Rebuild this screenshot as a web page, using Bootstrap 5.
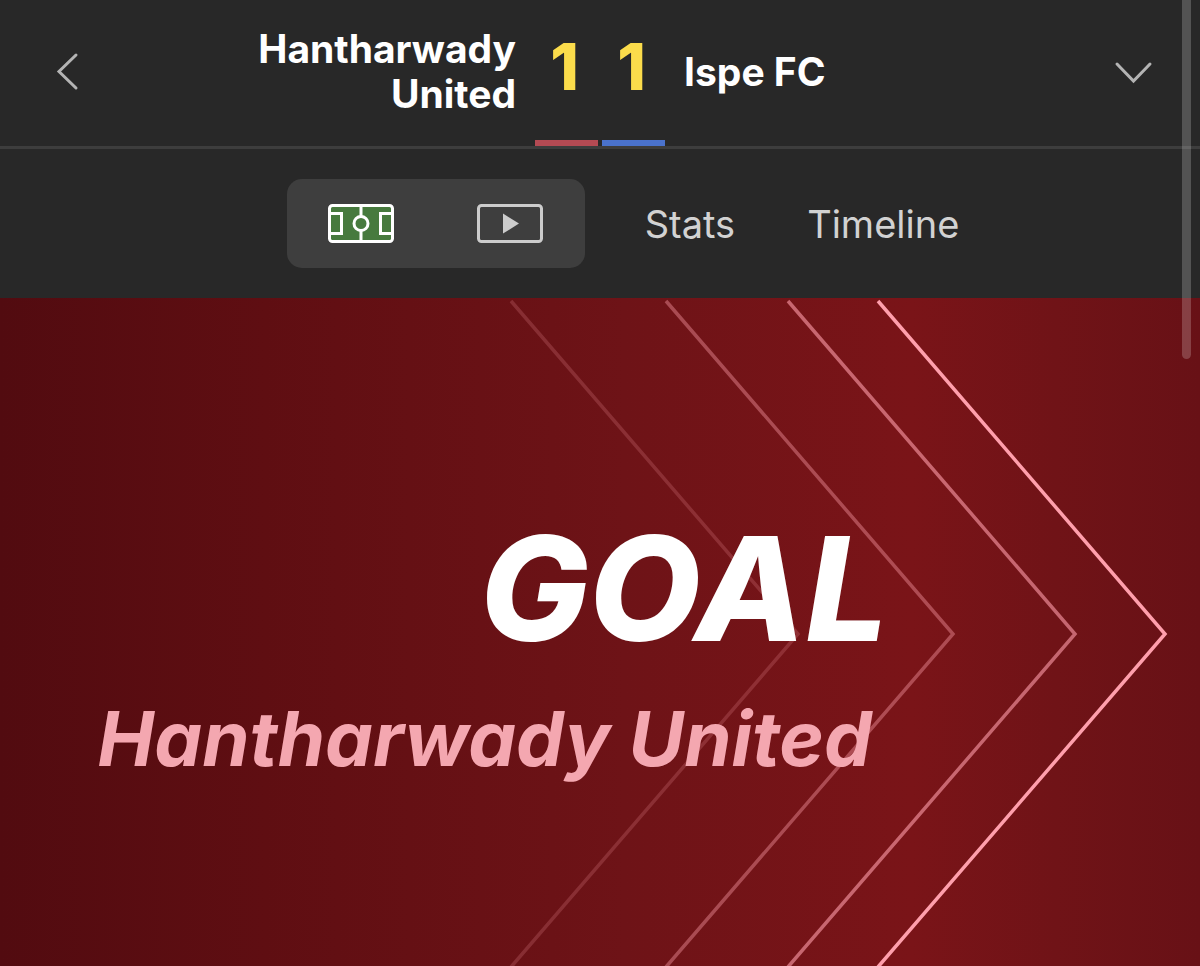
<!DOCTYPE html>
<html lang="en">
<head>
<meta charset="utf-8">
<meta name="viewport" content="width=device-width, initial-scale=1">
<title>Hantharwady United v Ispe FC</title>
<link href="https://cdn.jsdelivr.net/npm/bootstrap@5.3.0/dist/css/bootstrap.min.css" rel="stylesheet">
<style>
  body { background: #282828; color: #fff; font-family: Inter, "Liberation Sans", sans-serif; }
  .score-header { display: grid; grid-template-columns: 1fr auto 1fr; border-bottom: 3px solid #3d3d3d; }
  .side { padding: 0 19px 4px; }
  .team { font-size: 39px; line-height: 45px; font-weight: 700; }
  .home-team { max-width: 300px; }
  .icon-btn { color: #b4b4b4; line-height: 0; }
  .goals { width: 63px; padding: 30px 4px 36px 0; font-size: 65px; line-height: 74px; font-weight: 800; border-bottom: 6px solid; text-align: center; }
  .goals span { color: #fbdc4b; }
  .goals-home { border-color: #b44a53; }
  .goals-away { border-color: #4a72cc; }
  .view-tabs { padding: 30px 0 30px 46px; font-size: 38px; line-height: 45px; }
  .view-group { background: #3e3e3e; border-radius: 15px; height: 89px; }
  .view-group button { width: 149px; line-height: 0; }
  .view-tabs a { color: #d2d2d2; padding-top: 2px; }
  .first-link { margin-left: 60px; }
  .next-link { margin-left: 72px; }
  .goal-panel { background: linear-gradient(90deg, #520b10 0%, #5f0e12 22%, #6e1317 52%, #7a1418 76%, #701317 88%, #681116 100%); padding: 28px 312px 0 0; }
  .goal-title { font-size: 145px; line-height: 160px; font-weight: 800; font-style: italic; }
  .goal-team { font-size: 76px; line-height: 90px; font-weight: 700; font-style: italic; color: #f4a7b0; margin-top: 24px; padding-right: 16px; }
  .scroll-thumb { width: 9px; height: 359px; right: 9px; background: rgba(255,255,255,.2); border-radius: 0 0 5px 5px; }
</style>
</head>
<body class="min-vh-100 d-flex flex-column position-relative">
<header class="score-header">
  <div class="side d-flex align-items-center justify-content-between">
    <button type="button" class="icon-btn btn p-0 border-0 ms-4" aria-label="Back">
      <svg width="46" height="40" viewBox="0 0 46 40" fill="none" stroke="currentColor" stroke-width="3" stroke-linecap="round"><path d="M33 4 16 20.500 33 37"/></svg>
    </button>
    <div class="team home-team text-end">Hantharwady United</div>
  </div>
  <div class="d-flex">
    <div class="goals goals-home"><span>1</span></div>
    <div class="goals goals-away ms-1"><span>1</span></div>
  </div>
  <div class="side d-flex align-items-center justify-content-between">
    <div class="team">Ispe FC</div>
    <button type="button" class="icon-btn btn p-0 border-0 me-4" aria-label="Show matches">
      <svg width="46" height="40" viewBox="0 0 46 40" fill="none" stroke="currentColor" stroke-width="3" stroke-linecap="round"><path d="M6 13 22.500 30 39 13"/></svg>
    </button>
  </div>
</header>
<nav class="view-tabs d-flex align-items-center justify-content-center" aria-label="Match views">
  <div class="view-group d-flex">
    <button type="button" class="btn p-0 border-0" aria-label="Pitch">
      <svg width="66" height="39" viewBox="0 0 66 39" fill="none" stroke="#fff" stroke-width="3"><rect x="1.500" y="1.500" width="63" height="36" rx="3" fill="#477a3e"/><path d="M33 2v35M2 9.500h11.500v20H2M64 9.500H52.500v20H64"/><circle cx="33" cy="19.500" r="7" fill="#477a3e"/></svg>
    </button>
    <button type="button" class="btn p-0 border-0" aria-label="Video">
      <svg width="66" height="39" viewBox="0 0 66 39"><rect x="1.500" y="1.500" width="63" height="36" rx="3" fill="none" stroke="#ccc" stroke-width="3"/><path d="M26 9.500 42 19.500 26 29.500z" fill="#ccc"/></svg>
    </button>
  </div>
  <a href="#stats" class="first-link text-decoration-none">Stats</a>
  <a href="#timeline" class="next-link text-decoration-none">Timeline</a>
</nav>
<main class="goal-panel flex-grow-1 position-relative overflow-hidden d-flex flex-column justify-content-center align-items-end">
  <svg class="position-absolute top-0 start-0 w-100 h-100" viewBox="0 0 1200 668" preserveAspectRatio="xMaxYMid slice" fill="none" stroke="#ff9fac" stroke-width="3.500" aria-hidden="true">
    <path d="M511 3 798 336 511 669" opacity=".2"/>
    <path d="M666 3 953 336 666 669" opacity=".4"/>
    <path d="M788 3 1075 336 788 669" opacity=".6"/>
    <path d="M878 3 1165 336 878 669"/>
  </svg>
  <h1 class="goal-title position-relative mb-0">GOAL</h1>
  <p class="goal-team position-relative mb-0">Hantharwady United</p>
</main>
<div class="scroll-thumb position-absolute top-0"></div>
<script src="https://cdn.jsdelivr.net/npm/bootstrap@5.3.0/dist/js/bootstrap.bundle.min.js"></script>
</body>
</html>
